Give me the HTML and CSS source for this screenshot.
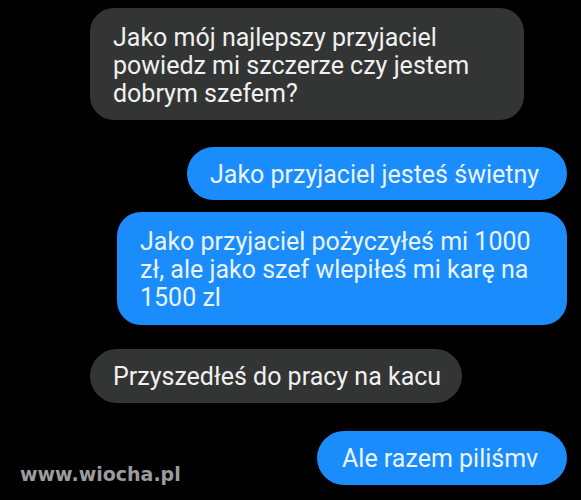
FILE: index.html
```html
<!DOCTYPE html>
<html lang="pl">
<head>
<meta charset="utf-8">
<link rel="stylesheet" href="styles.css">
</head>
<body>
<div class="chat">
  <div class="msg in b1">Jako mój najlepszy przyjaciel<br>powiedz mi szczerze czy jestem<br>dobrym szefem?</div>
  <div class="msg out b2">Jako przyjaciel jesteś świetny</div>
  <div class="msg out b3">Jako przyjaciel pożyczyłeś mi 1000<br>zł, ale jako szef wlepiłeś mi karę na<br>1500 zl</div>
  <div class="msg in b4">Przyszedłeś do pracy na kacu</div>
  <div class="last-row">
    <div class="watermark">www.wiocha.pl</div>
    <div class="msg out b5">Ale razem piliśmv</div>
  </div>
</div>
</body>
</html>
```
FILE: styles.css
```css
html, body {
  margin: 0;
  padding: 0;
  background: #000;
}
body {
  width: 581px;
  height: 500px;
  overflow: hidden;
  font-family: Roboto, "Noto Sans", sans-serif;
}
.chat {
  display: flex;
  flex-direction: column;
  padding: 8px 14px 0 0;
}
.msg {
  box-sizing: border-box;
  font-size: 25px;
  line-height: 28px;
  padding: 14px 23px;
  white-space: nowrap;
}
.in {
  background: #333534;
  color: #f0f0f0;
  align-self: flex-start;
  margin-left: 90px;
}
.out {
  background: #1b8cfc;
  color: #e8f4ff;
  align-self: flex-end;
}
.b1 {
  width: 434px;
  height: 112px;
  border-radius: 24px;
  padding-top: 16px;
}
.b2 {
  margin-top: 27px;
  width: 380px;
  height: 53px;
  border-radius: 27px;
}
.b3 {
  margin-top: 12px;
  width: 450px;
  height: 113px;
  border-radius: 24px;
  padding-top: 16px;
}
.b4 {
  margin-top: 24px;
  width: 372px;
  height: 54px;
  border-radius: 27px;
}
.last-row {
  margin-top: 26px;
  display: flex;
  justify-content: space-between;
  align-items: flex-start;
}
.watermark {
  margin-left: 20px;
  margin-top: 34px;
  font-family: "DejaVu Sans", sans-serif;
  font-weight: bold;
  font-size: 19px;
  color: #9c9c9c;
}
.b5 {
  width: 250px;
  height: 54px;
  border-radius: 27px;
  padding-left: 25px;
}
```
